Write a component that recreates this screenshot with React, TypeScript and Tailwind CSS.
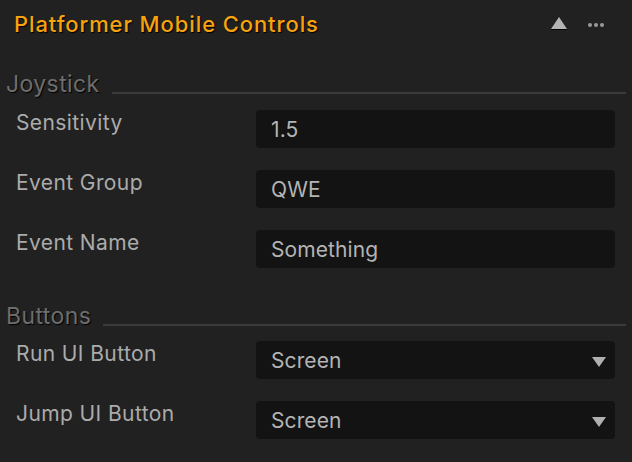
import React from "react";

// One property row: label on the left, field on the right
interface RowProps {
  label: string;
  value: string;
  dropdown?: boolean;
}

const Row: React.FC<RowProps> = ({ label, value, dropdown }) => (
  <div className="flex h-[38px] items-start">
    <div className="w-[256px] pl-[16px] text-[21px] leading-[25px] tracking-[0.4px] text-[#ababab]">
      {label}
    </div>
    <div className="flex h-[38px] w-[359px] items-center justify-between rounded-[4px] bg-[#131313] pl-[15px] pr-[9px] text-[21px] tracking-[0.1px] text-[#b4b4b4]">
      <span className="pt-[1px]">{value}</span>
      {dropdown && (
        <svg width="14" height="10" viewBox="0 0 14 10" className="mt-[3px]">
          <polygon points="0,0 14,0 7,10" fill="#b0b0b0" />
        </svg>
      )}
    </div>
  </div>
);

const SectionHeader: React.FC<{ title: string }> = ({ title }) => (
  <div className="flex h-[28px] items-end pl-[6px] pr-[6px]">
    <span className="text-[23px] leading-[28px] tracking-[0.4px] text-[#6d6d6d] [text-shadow:1px_1px_1px_#000]">
      {title}
    </span>
    <div className="mb-[4px] ml-[12px] h-[2px] flex-1 bg-[#3b3b3b]" />
  </div>
);

export default function App() {
  return (
    <div
      className="h-[462px] w-[632px] overflow-hidden bg-[#212121]"
      style={{ fontFamily: "Inter, 'Liberation Sans', sans-serif" }}
    >
      {/* Header */}
      <div className="flex h-[48px] items-center justify-between pl-[14px] pr-[28px]">
        <h3 className="pt-[1px] text-[22px] font-medium tracking-[0.9px] text-[#f6a30e] [text-shadow:1px_1px_1px_#000]">
          Platformer Mobile Controls
        </h3>
        <div className="flex items-center gap-[21px]">
          <svg width="16" height="13" viewBox="0 0 16 13" className="-mt-[2px]">
            <polygon points="8,1 16,13 0,13" fill="#000" />
            <polygon points="8,0 16,12 0,12" fill="#b3b3b3" />
          </svg>
          <div className="flex gap-[2px] pt-[2px]">
            <span className="h-[4px] w-[4px] rounded-full bg-[#9a9a9a]" />
            <span className="h-[4px] w-[4px] rounded-full bg-[#9a9a9a]" />
            <span className="h-[4px] w-[4px] rounded-full bg-[#9a9a9a]" />
          </div>
        </div>
      </div>

      {/* Joystick */}
      <div className="mt-[22px]">
        <SectionHeader title="Joystick" />
      </div>
      <div className="mt-[12px] flex flex-col gap-[22px]">
        <Row label="Sensitivity" value="1.5" />
        <Row label="Event Group" value="QWE" />
        <Row label="Event Name" value="Something" />
      </div>

      {/* Buttons */}
      <div className="mt-[34px]">
        <SectionHeader title="Buttons" />
      </div>
      <div className="mt-[11px] flex flex-col gap-[22px]">
        <Row label="Run UI Button" value="Screen" dropdown />
        <Row label="Jump UI Button" value="Screen" dropdown />
      </div>
    </div>
  );
}
